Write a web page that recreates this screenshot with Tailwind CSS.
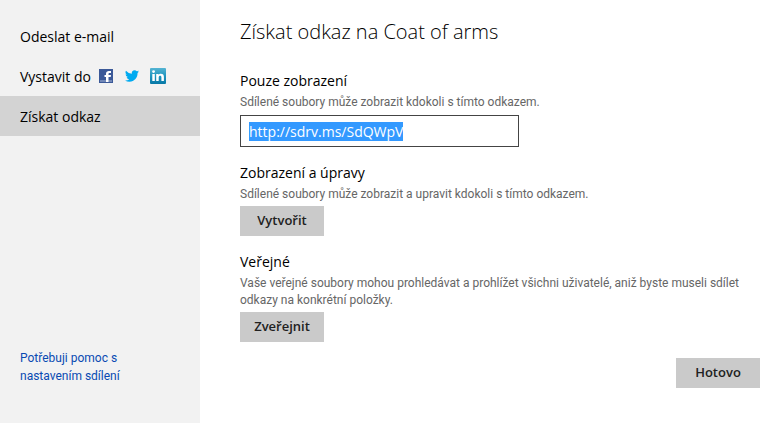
<!DOCTYPE html>
<html lang="cs">

<head>
    <meta charset="UTF-8">
    <meta name="viewport" content="width=device-width, initial-scale=1.0">
    <title>Získat odkaz</title>
    <!-- Tailwind CSS CDN -->
    <script src="https://cdn.jsdelivr.net/npm/@tailwindcss/browser@4"></script>
</head>

<body class="flex min-h-screen bg-white text-black font-['Open_Sans',sans-serif]">
    <!-- Postranní nabídka -->
    <aside class="flex flex-col justify-between w-[200px] shrink-0 bg-[#f2f2f2] pt-4 pb-[38px]">
        <nav class="text-[14px]">
            <a href="#email" class="flex items-center h-10 px-5">Odeslat e-mail</a>
            <a href="#vystavit" class="flex items-center h-10 px-5">
                <span>Vystavit do</span>
                <!-- Facebook -->
                <svg class="ml-2" width="14" height="14" viewBox="0 0 14 14">
                    <rect width="14" height="14" fill="#3b5998" />
                    <rect x="1" y="11" width="12" height="2" fill="#7288b8" />
                    <path d="M7 13V8H5.500V6H7V4.700C7 2.800 8.200 2 9.900 2H12v2h-1.200c-.9 0-1.300.300-1.300 1V6H12l-.3 2H9.500v5z" fill="#fff" />
                </svg>
                <!-- Twitter -->
                <svg class="ml-3" width="14" height="12" viewBox="0 0 24 20">
                    <path d="M24 2.400a10 10 0 0 1-2.800.8A5 5 0 0 0 23.300.500a10 10 0 0 1-3.100 1.200A4.900 4.900 0 0 0 11.800 6.200 14 14 0 0 1 1.700 1a4.900 4.900 0 0 0 1.500 6.600A5 5 0 0 1 1 7v.1a4.900 4.900 0 0 0 3.900 4.800 5 5 0 0 1-2.200.1 4.900 4.900 0 0 0 4.600 3.400A9.900 9.900 0 0 1 0 17.500 14 14 0 0 0 7.500 19.700c9.100 0 14-7.500 14-14V5A10 10 0 0 0 24 2.400z" fill="#00aaf0" />
                </svg>
                <!-- LinkedIn -->
                <svg class="ml-[11px]" width="16" height="16" viewBox="0 0 16 16">
                    <defs>
                        <linearGradient id="in-bg" x1="0" y1="0" x2="0" y2="1">
                            <stop offset="0" stop-color="#55b4d3" />
                            <stop offset=".5" stop-color="#1e95bf" />
                            <stop offset="1" stop-color="#0878a6" />
                        </linearGradient>
                    </defs>
                    <rect width="16" height="16" rx="1" fill="url(#in-bg)" />
                    <path d="M2.300 6h2.500v7H2.300zM2.100 3.600a1.450 1.400 0 1 1 2.900 0a1.450 1.400 0 1 1-2.900 0zM6.200 6h2.400v1c.4-.7 1.200-1.200 2.300-1.200 2.100 0 3 1.200 3 3.200v4h-2.500V9.300c0-1-.3-1.600-1.200-1.600-1 0-1.500.7-1.500 1.600V13H6.200z" fill="#fff" />
                </svg>
            </a>
            <a href="#odkaz" aria-current="page" class="flex items-center h-10 px-5 bg-[#d3d3d3]">Získat odkaz</a>
        </nav>
        <a href="#napoveda" class="px-5 text-[12px] leading-[18px] font-[Roboto,sans-serif] text-[#094ab2]">Potřebuji pomoc s<br>nastavením sdílení</a>
    </aside>

    <!-- Obsah -->
    <main class="flex flex-col grow pt-4 pb-[35px] pl-10 pr-[15px]">
        <h1 class="text-[20px] leading-8 font-light">Získat odkaz na Coat of arms</h1>

        <section class="mt-[23px]">
            <label for="link" class="block text-[14px] leading-5">Pouze zobrazení</label>
            <p class="mt-[3px] text-[12px] leading-[17px] font-[Roboto,sans-serif] text-[#666]">Sdílené soubory může zobrazit kdokoli s tímto odkazem.</p>
            <input type="text" id="link" value="http://sdrv.ms/SdQWpV" readonly class="block mt-1 w-[279px] h-8 border border-[#444] px-2 text-[14px] outline-none selection:bg-[#3399ff] selection:text-white">
        </section>

        <section class="mt-4">
            <h2 class="text-[14px] leading-5">Zobrazení a úpravy</h2>
            <p class="mt-[3px] text-[12px] leading-[17px] font-[Roboto,sans-serif] text-[#666]">Sdílené soubory může zobrazit a upravit kdokoli s tímto odkazem.</p>
            <button type="button" class="block mt-[3px] w-[84px] h-[30px] bg-[#cacaca] text-[13px] font-semibold text-[#212121]">Vytvořit</button>
        </section>

        <section class="mt-4">
            <h2 class="text-[14px] leading-5">Veřejné</h2>
            <p class="mt-[3px] text-[12px] leading-[17px] font-[Roboto,sans-serif] text-[#666]">Vaše veřejné soubory mohou prohledávat a prohlížet všichni uživatelé, aniž byste museli sdílet odkazy na konkrétní položky.</p>
            <button type="button" class="block mt-[3px] w-[84px] h-[30px] bg-[#cacaca] text-[13px] font-semibold text-[#212121]">Zveřejnit</button>
        </section>

        <button type="button" class="mt-auto self-end w-[84px] h-[30px] bg-[#cacaca] text-[13px] font-semibold text-[#212121]">Hotovo</button>
    </main>

    <script>
        // Odkaz je po otevření rovnou označený ke zkopírování
        const link = document.getElementById("link");
        link.focus();
        link.select();
    </script>
</body>
</html>
